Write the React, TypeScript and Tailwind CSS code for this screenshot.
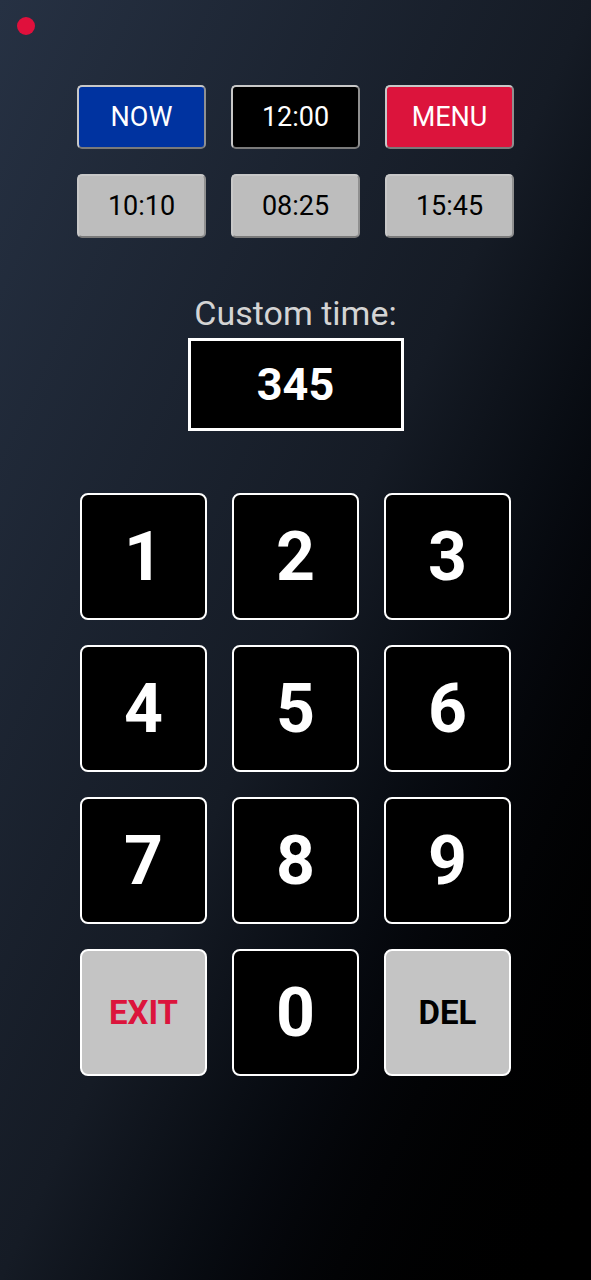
import React, { useState } from 'react';

const presets = [
  { label: 'NOW', className: 'bg-[#0033a0] text-white' },
  { label: '12:00', className: 'bg-black text-white' },
  { label: 'MENU', className: 'bg-[#dc143c] text-white' },
  { label: '10:10', className: 'bg-[#bdbdbd] text-black' },
  { label: '08:25', className: 'bg-[#bdbdbd] text-black' },
  { label: '15:45', className: 'bg-[#bdbdbd] text-black' },
];

const keys = ['1', '2', '3', '4', '5', '6', '7', '8', '9'];

export default function App() {
  const [value, setValue] = useState('345');

  const press = (k: string) => setValue((v) => (v + k).slice(0, 4));
  const del = () => setValue((v) => v.slice(0, -1));

  return (
    <div
      className="relative min-h-[1280px] w-full bg-gradient-to-br from-[#263143] via-[#151b25] to-black"
      style={{ fontFamily: 'Roboto, "Liberation Sans", sans-serif' }}
    >
      {/* status dot */}
      <div className="absolute left-[17px] top-[17px] h-[18px] w-[18px] rounded-full bg-[#e0103c]" />

      <div className="flex flex-col items-center pt-[85px]">
        {/* preset buttons */}
        <div className="grid grid-cols-[repeat(3,129px)] gap-[25px]">
          {presets.map((p) => (
            <button
              key={p.label}
              className={`h-[64px] rounded-[5px] border-2 border-[#c8c8c8] border-b-[#7a7a7a] border-r-[#909090] text-[27px] leading-none ${p.className}`}
            >
              {p.label}
            </button>
          ))}
        </div>

        {/* custom time */}
        <div className="mt-[58px] text-[34px] leading-none text-[#d4d4d4]">Custom time:</div>
        <div className="mt-[8px] flex h-[93px] w-[216px] items-center justify-center border-[3px] border-white bg-black text-[45px] font-bold leading-none text-white">
          {value}
        </div>

        {/* keypad */}
        <div className="mt-[62px] grid grid-cols-[repeat(3,127px)] gap-x-[25px] gap-y-[25px]">
          {keys.map((k) => (
            <button
              key={k}
              onClick={() => press(k)}
              className="flex h-[127px] items-center justify-center rounded-lg border-2 border-white bg-black text-[68px] font-bold leading-none text-white"
            >
              {k}
            </button>
          ))}
          <button className="flex h-[127px] items-center justify-center rounded-lg border-2 border-white bg-[#c4c4c4] text-[33px] font-bold leading-none text-[#dc143c]">
            EXIT
          </button>
          <button
            onClick={() => press('0')}
            className="flex h-[127px] items-center justify-center rounded-lg border-2 border-white bg-black text-[68px] font-bold leading-none text-white"
          >
            0
          </button>
          <button
            onClick={del}
            className="flex h-[127px] items-center justify-center rounded-lg border-2 border-white bg-[#c4c4c4] text-[33px] font-bold leading-none text-black"
          >
            DEL
          </button>
        </div>
      </div>
    </div>
  );
}
